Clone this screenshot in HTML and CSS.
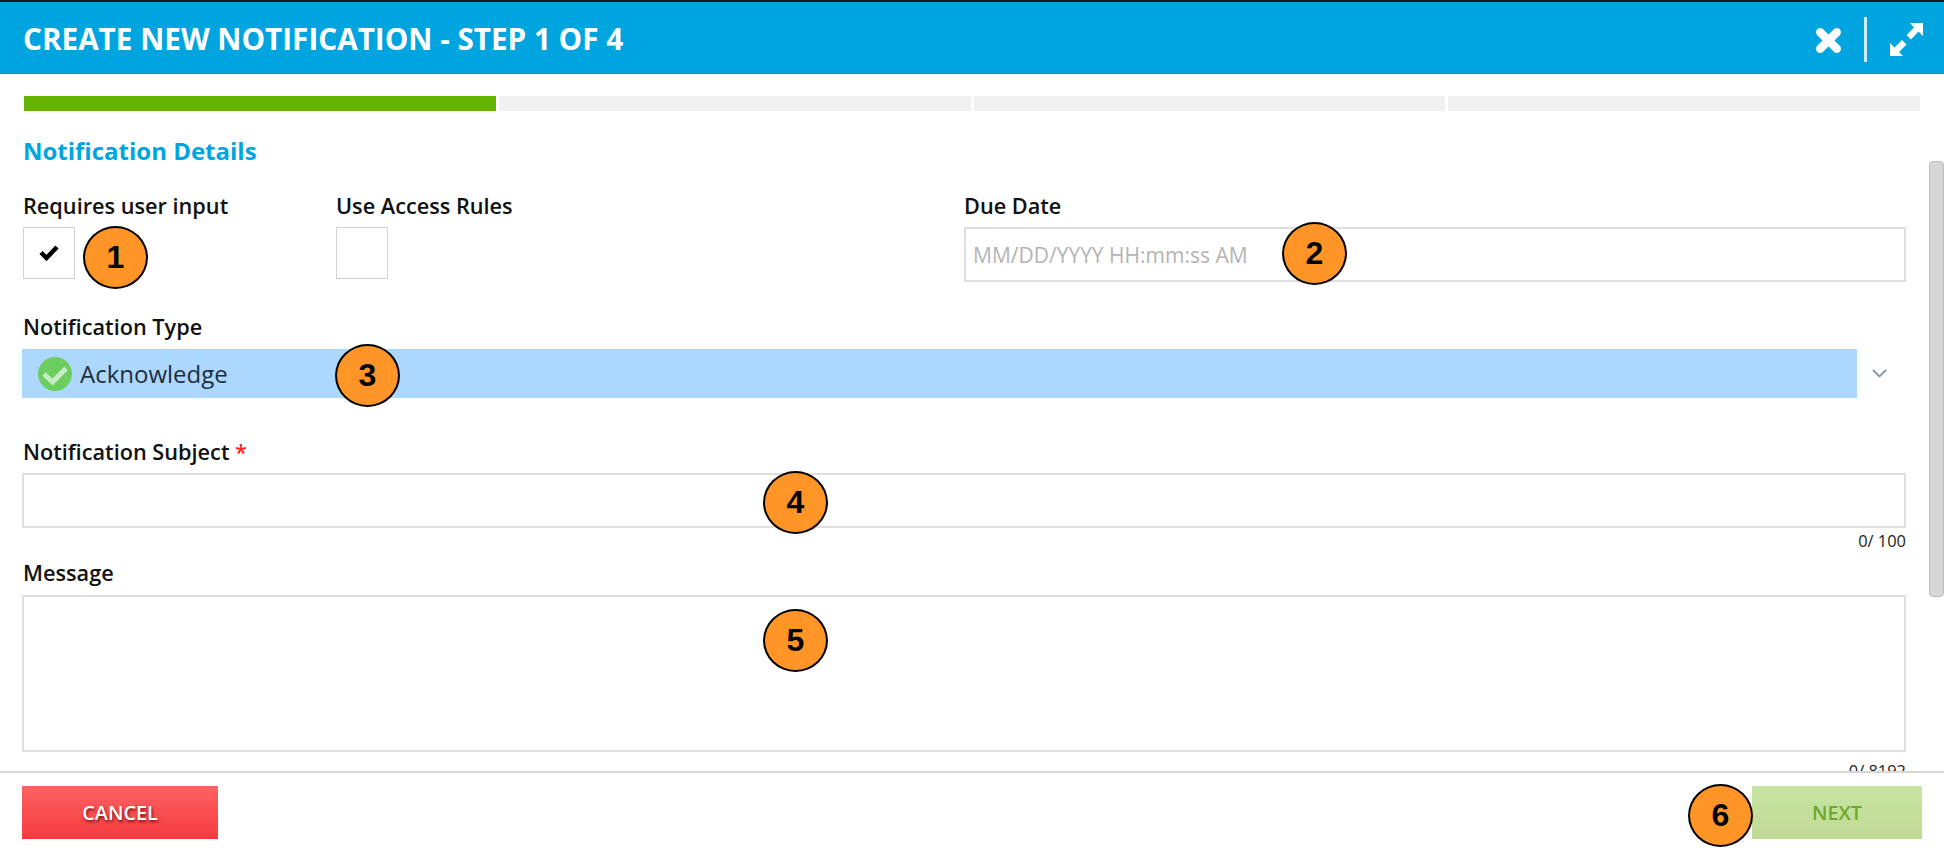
FILE: index.html
```html
<!DOCTYPE html>
<html lang="en">
<head>
  <meta charset="UTF-8">
  <title>Create New Notification</title>
  <link rel="stylesheet" href="styles.css">
</head>
<body>
  <div class="page">
    <header class="header">
      <h1>CREATE NEW NOTIFICATION - STEP 1 OF 4</h1>
      <div class="header-tools">
        <svg class="icon-close" viewBox="0 0 26 26"><path d="M5 5 L21 21 M21 5 L5 21" stroke="#fff" stroke-width="8" stroke-linecap="round" fill="none"/></svg>
        <span class="tool-divider"></span>
        <svg class="icon-expand" viewBox="0 0 33 33"><path d="M20 0 H33 V13 L28.500 8.500 L21 16.500 L16.500 12 L24 4.500 Z M0 33 V20 L4.500 24.500 L12 17 L16.500 21.500 L9 29 L13 33 Z" fill="#fff"/></svg>
      </div>
    </header>

    <div class="steps">
      <div class="step step-done"></div>
      <div class="step"></div>
      <div class="step"></div>
      <div class="step"></div>
    </div>

    <div class="content">
      <form class="form">
        <h2>Notification Details</h2>

        <div class="row-top">
          <div class="col-check">
            <label class="field-label">Requires user input</label>
            <div class="checkbox">
              <svg viewBox="0 0 22 18" class="icon-check"><path d="M3 9.500 L8.500 15 L19 4" stroke="#000" stroke-width="4.500" fill="none"/></svg>
            </div>
          </div>
          <div class="col-access">
            <label class="field-label">Use Access Rules</label>
            <div class="checkbox"></div>
          </div>
          <div class="col-date">
            <label class="field-label">Due Date</label>
            <input class="text-input" type="text" placeholder="MM/DD/YYYY HH:mm:ss AM">
          </div>
        </div>

        <label class="field-label label-type">Notification Type</label>
        <div class="select-row">
          <div class="select-value">
            <svg class="icon-ack" viewBox="0 0 34 34">
              <circle cx="17" cy="17" r="17" fill="#6cce5f"/>
              <path d="M6 17 L14.500 25 L28 11.500" stroke="#c8ebc8" stroke-width="5" fill="none"/>
            </svg>
            <span>Acknowledge</span>
          </div>
          <svg class="icon-chevron" viewBox="0 0 15 9"><path d="M1 1 L7.500 7.500 L14 1" stroke="#8a97a5" stroke-width="1.800" fill="none"/></svg>
        </div>

        <label class="field-label label-subject">Notification Subject <span class="required">*</span></label>
        <input class="text-input" type="text">
        <div class="counter">0/ 100</div>

        <label class="field-label label-message">Message</label>
        <textarea class="text-area"></textarea>
        <div class="counter counter-message">0/ 8192</div>
      </form>
      <div class="scroll-track"><div class="scroll-thumb"></div></div>
    </div>

    <footer class="footer">
      <button type="button" class="btn btn-cancel">CANCEL</button>
      <button type="button" class="btn btn-next">NEXT</button>
    </footer>

    <span class="badge badge-1">1</span>
    <span class="badge badge-2">2</span>
    <span class="badge badge-3">3</span>
    <span class="badge badge-4">4</span>
    <span class="badge badge-5">5</span>
    <span class="badge badge-6">6</span>
  </div>
</body>
</html>
```

FILE: styles.css
```css
html, body {
  margin: 0;
  padding: 0;
  background: #fff;
}
.page {
  position: relative;
  width: 1944px;
  height: 851px;
  overflow: hidden;
  display: flex;
  flex-direction: column;
  font-family: "Open Sans", sans-serif;
  color: #111;
  background: #fff;
}
.header {
  flex: none;
  height: 72px;
  border-top: 2px solid #14191e;
  background: #00a5e0;
  display: flex;
  align-items: center;
  justify-content: space-between;
  padding: 0 21px 0 23px;
}
h1 {
  margin: 0;
  font-size: 29.700px;
  font-weight: 700;
  color: #fff;
}
.header-tools {
  display: flex;
  align-items: center;
}
.icon-close {
  width: 27px;
  height: 27px;
  display: block;
  margin-top: 5px;
}
.tool-divider {
  width: 3px;
  height: 45px;
  background: #cfe9f5;
  margin: 3px 23px 0 22px;
}
.icon-expand {
  width: 33px;
  height: 33px;
  display: block;
  margin-top: 2px;
}
.steps {
  flex: none;
  display: flex;
  gap: 3px;
  margin: 22px 24px 0 24px;
  height: 15px;
}
.step {
  flex: 1;
  background: #f0f0f0;
}
.step-done {
  flex: none;
  width: 472px;
  background: #63b300;
}
.content {
  flex: 1;
  min-height: 0;
  display: flex;
  overflow: hidden;
}
.form {
  width: 1884px;
  margin-left: 22px;
  flex: none;
}
h2 {
  margin: 25px 0 28px 1px;
  font-size: 24px;
  line-height: 30px;
  font-weight: 700;
  color: #00a5e0;
}
.field-label {
  display: block;
  height: 24px;
  line-height: 24px;
  margin-left: 1px;
  font-size: 21.700px;
  font-weight: 600;
  color: #111;
}
.row-top {
  display: flex;
}
.row-top .field-label {
  margin-bottom: 9px;
}
.col-check {
  width: 313px;
  padding-left: 1px;
}
.col-check .field-label,
.col-access .field-label {
  margin-left: 0;
}
.col-access {
  width: 628px;
  padding-left: 0;
}
.col-date {
  flex: 1;
}
.col-date .field-label {
  margin-left: 0;
}
.checkbox {
  width: 50px;
  height: 50px;
  border: 1px solid #d2d2d2;
  display: flex;
  align-items: center;
  justify-content: center;
}
.icon-check {
  width: 22px;
  height: 18px;
  margin-top: -3px;
}
.text-input {
  display: block;
  box-sizing: border-box;
  width: 100%;
  height: 55px;
  border: 2px solid #dedede;
  border-radius: 0;
  outline: none;
  padding: 0 7px;
  font-family: "Open Sans", sans-serif;
  font-size: 21px;
  background: #fff;
}
.text-input::placeholder {
  color: #b4b4b4;
  opacity: 1;
}
.label-type {
  margin-top: 33px;
  margin-bottom: 10px;
}
.select-row {
  display: flex;
  align-items: center;
}
.select-value {
  width: 1835px;
  height: 49px;
  background: #acd8ff;
  display: flex;
  align-items: center;
  padding-left: 16px;
  box-sizing: border-box;
  font-size: 24px;
  color: #1f2d3d;
}
.icon-ack {
  width: 34px;
  height: 34px;
  margin-right: 8px;
  flex: none;
}
.icon-chevron {
  width: 15px;
  height: 9px;
  margin: 0 0 0 15px;
}
.label-subject {
  margin-top: 42px;
  margin-bottom: 9px;
}
.required {
  color: #f22;
}
.counter {
  height: 24px;
  line-height: 26px;
  text-align: right;
  font-size: 16.400px;
  color: #222;
}
.label-message {
  margin-top: 9px;
  margin-bottom: 10px;
}
.text-area {
  display: block;
  box-sizing: border-box;
  width: 100%;
  height: 157px;
  border: 2px solid #dedede;
  border-radius: 0;
  outline: none;
  resize: none;
  background: #fff;
}
.counter-message {
  margin-top: 6px;
}
.scroll-track {
  flex: none;
  margin-left: 23px;
  width: 15px;
}
.scroll-thumb {
  margin-top: 50px;
  height: 436px;
  box-sizing: border-box;
  background: #d6d6d6;
  border: 1px solid #bdbdbd;
  border-radius: 4px;
}
.footer {
  flex: none;
  height: 80px;
  box-sizing: border-box;
  border-top: 2px solid #d6d6d6;
  padding: 13px 22px 0 22px;
  display: flex;
  justify-content: space-between;
  align-items: flex-start;
  background: #fff;
  position: relative;
}
.btn {
  height: 53px;
  border: none;
  font-family: "Open Sans", sans-serif;
  font-size: 19.800px;
  font-weight: 600;
  padding: 0;
}
.btn-cancel {
  width: 196px;
  color: #fff;
  background: linear-gradient(#fc6262, #f63a3f);
  text-shadow: 1px 2px 3px rgba(90, 0, 0, 0.8);
}
.btn-next {
  width: 170px;
  color: #6fa82c;
  background: linear-gradient(#c7e4a2, #c0da96);
}
.badge {
  position: absolute;
  box-sizing: border-box;
  width: 65px;
  height: 63px;
  border: 2px solid #000;
  border-radius: 50%;
  background: #ff9526;
  color: #000;
  font-family: "Liberation Sans", sans-serif;
  font-size: 32px;
  font-weight: 700;
  line-height: 59px;
  text-align: center;
}
.badge-1 { left: 83px; top: 226px; }
.badge-2 { left: 1282px; top: 222px; }
.badge-3 { left: 335px; top: 344px; }
.badge-4 { left: 763px; top: 471px; }
.badge-5 { left: 763px; top: 609px; }
.badge-6 { left: 1688px; top: 784px; }
```
